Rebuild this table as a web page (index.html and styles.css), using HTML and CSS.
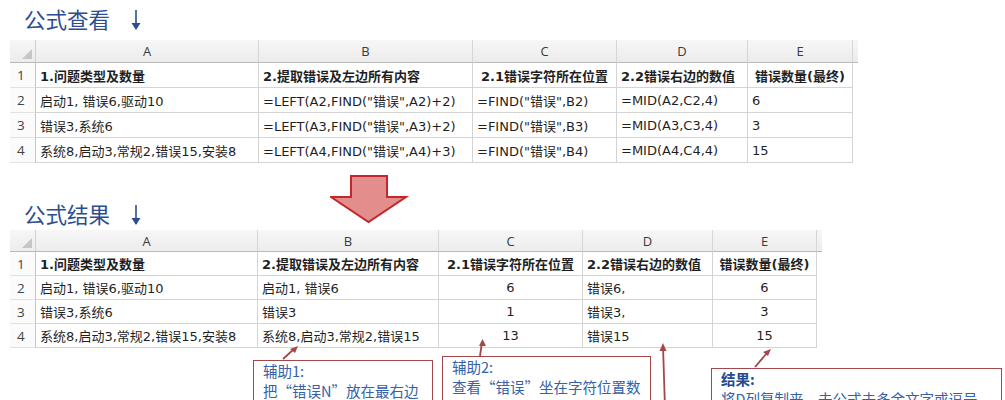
FILE: index.html
```html
<!DOCTYPE html>
<html lang="zh-CN">
<head>
<meta charset="utf-8">
<title>公式查看</title>
<link rel="stylesheet" href="styles.css">
</head>
<body>
<div class="page">
  <div class="title t1">
    <span class="title-text">公式查看</span>
    <svg class="down" width="12" height="22" viewBox="0 0 12 22"><path d="M6 1 V20" stroke="#2e4d8f" stroke-width="1.6" fill="none"/><path d="M1.5 14 L6 21 L10.5 14 Z" fill="#2e4d8f"/></svg>
  </div>

  <div class="sheet s1">
    <div class="row head">
      <div class="corner"><svg width="10" height="10" viewBox="0 0 10 10"><path d="M10 0 V10 H0 Z" fill="#c6c6c6"/></svg></div>
      <div class="col">A</div><div class="col">B</div><div class="col">C</div><div class="col">D</div><div class="col">E</div><div class="col tail"></div>
    </div>
    <div class="row">
      <div class="num">1</div>
      <div class="cell b">1.问题类型及数量</div>
      <div class="cell b">2.提取错误及左边所有内容</div>
      <div class="cell b c">2.1错误字符所在位置</div>
      <div class="cell b">2.2错误右边的数值</div>
      <div class="cell b c">错误数量(最终)</div>
    </div>
    <div class="row">
      <div class="num">2</div>
      <div class="cell">启动1, 错误6,驱动10</div>
      <div class="cell">=LEFT(A2,FIND("错误",A2)+2)</div>
      <div class="cell">=FIND("错误",B2)</div>
      <div class="cell">=MID(A2,C2,4)</div>
      <div class="cell">6</div>
    </div>
    <div class="row">
      <div class="num">3</div>
      <div class="cell">错误3,系统6</div>
      <div class="cell">=LEFT(A3,FIND("错误",A3)+2)</div>
      <div class="cell">=FIND("错误",B3)</div>
      <div class="cell">=MID(A3,C3,4)</div>
      <div class="cell">3</div>
    </div>
    <div class="row">
      <div class="num">4</div>
      <div class="cell">系统8,启动3,常规2,错误15,安装8</div>
      <div class="cell">=LEFT(A4,FIND("错误",A4)+3)</div>
      <div class="cell">=FIND("错误",B4)</div>
      <div class="cell">=MID(A4,C4,4)</div>
      <div class="cell">15</div>
    </div>
  </div>

  <div class="mid">
    <div class="title t2">
      <span class="title-text">公式结果</span>
      <svg class="down" width="12" height="22" viewBox="0 0 12 22"><path d="M6 1 V20" stroke="#2e4d8f" stroke-width="1.6" fill="none"/><path d="M1.5 14 L6 21 L10.5 14 Z" fill="#2e4d8f"/></svg>
    </div>
    <svg class="bigarrow" width="80" height="50" viewBox="0 0 80 50">
      <path d="M21 1 H57 V22 H76 L38.5 47 L1 22 H21 Z" fill="#e38d8d" stroke="#c3262c" stroke-width="2" stroke-linejoin="miter"/>
    </svg>
  </div>

  <div class="sheet s2">
    <div class="row head">
      <div class="corner"><svg width="10" height="10" viewBox="0 0 10 10"><path d="M10 0 V10 H0 Z" fill="#c6c6c6"/></svg></div>
      <div class="col">A</div><div class="col">B</div><div class="col">C</div><div class="col">D</div><div class="col">E</div><div class="col tail"></div>
    </div>
    <div class="row">
      <div class="num">1</div>
      <div class="cell b">1.问题类型及数量</div>
      <div class="cell b">2.提取错误及左边所有内容</div>
      <div class="cell b c">2.1错误字符所在位置</div>
      <div class="cell b">2.2错误右边的数值</div>
      <div class="cell b c">错误数量(最终)</div>
    </div>
    <div class="row">
      <div class="num">2</div>
      <div class="cell">启动1, 错误6,驱动10</div>
      <div class="cell">启动1, 错误6</div>
      <div class="cell c">6</div>
      <div class="cell">错误6,</div>
      <div class="cell c">6</div>
    </div>
    <div class="row">
      <div class="num">3</div>
      <div class="cell">错误3,系统6</div>
      <div class="cell">错误3</div>
      <div class="cell c">1</div>
      <div class="cell">错误3,</div>
      <div class="cell c">3</div>
    </div>
    <div class="row">
      <div class="num">4</div>
      <div class="cell">系统8,启动3,常规2,错误15,安装8</div>
      <div class="cell">系统8,启动3,常规2,错误15</div>
      <div class="cell c">13</div>
      <div class="cell">错误15</div>
      <div class="cell c">15</div>
    </div>
  </div>

  <div class="notes">
    <svg class="pointers" width="1005" height="60" viewBox="0 0 1005 60">
      <g stroke="#a4474b" stroke-width="1.8" fill="none">
        <path d="M283 11 L294 1"/>
        <path d="M480 8 L482 -6"/>
        <path d="M665 60 L663 -2"/>
        <path d="M755 19 L767 5"/>
      </g>
      <g fill="#a4474b">
        <path d="M298 -2 L290 1 L295 5 Z"/>
        <path d="M482.5 -9 L479 -2 L486 -2 Z"/>
        <path d="M663 -5 L659.5 3 L666.5 3 Z"/>
        <path d="M771 1 L763 4 L768 8 Z"/>
      </g>
    </svg>
    <div class="note n1">
      <div>辅助1:</div>
      <div>把“错误N”放在最右边</div>
    </div>
    <div class="note n2">
      <div>辅助2:</div>
      <div>查看“错误”坐在字符位置数</div>
    </div>
    <div class="note n3">
      <div class="strong">结果:</div>
      <div>将D列复制来，去公式去多余文字或逗号</div>
    </div>
  </div>
</div>
</body>
</html>
```

FILE: styles.css
```css
html, body {
  margin: 0;
  padding: 0;
  background: #ffffff;
}

body {
  font-family: "DejaVu Sans", "Noto Sans CJK SC", sans-serif;
  color: #1e1e1e;
  overflow: hidden;
}

.page {
  width: 1005px;
  height: 400px;
  overflow: hidden;
}

.title {
  display: flex;
  align-items: center;
  gap: 20px;
  padding-left: 24px;
  color: #2e4d8f;
  font-family: "Noto Sans CJK SC", sans-serif;
  font-size: 21.5px;
  line-height: 24px;
}

.t1 {
  height: 40px;
  padding-top: 7px;
  box-sizing: border-box;
  align-items: flex-start;
}

.down {
  margin-top: 2px;
}

.sheet {
  margin-left: 10px;
  font-size: 13px;
}

.row {
  display: grid;
  align-items: stretch;
}

.s1 .row {
  grid-template-columns: 26px 223px 214px 144px 131px 105px 5px;
  height: 25px;
}

.s1 .row.head {
  height: 23px;
}

.s2 .row {
  grid-template-columns: 26px 222px 181px 144px 130px 104px 5px;
  height: 24px;
}

.s2 .row.head {
  height: 22px;
}

.head > div {
  background: linear-gradient(#f7f7f7, #ececec);
  border-bottom: 1px solid #b9b9b9;
  box-sizing: border-box;
}

.corner {
  border-right: 1px solid #d0d0d0;
  display: flex;
  align-items: flex-end;
  justify-content: flex-end;
  padding: 0 3px 3px 0;
}

.col {
  border-right: 1px solid #d6d6d6;
  display: flex;
  align-items: center;
  justify-content: center;
  color: #3a3a3a;
  font-family: "Open Sans", sans-serif;
  font-size: 13px;
}

.col.tail {
  border-right: none;
}

.num {
  display: flex;
  align-items: center;
  padding-left: 7px;
  color: #444;
  background: #fbfbfb;
  border-right: 1px solid #c4c4c4;
  border-bottom: 1px solid #e2e2e2;
  font-family: "Open Sans", sans-serif;
  font-size: 13.5px;
}

.cell {
  display: flex;
  align-items: center;
  padding-left: 4px;
  white-space: nowrap;
  overflow: hidden;
  border-right: 1px solid #d4d4d4;
  border-bottom: 1px solid #d4d4d4;
  box-sizing: border-box;
  color: #1f1f1f;
}

.cell.b {
  font-weight: 700;
}

.cell.c {
  justify-content: center;
  padding-left: 0;
}

.mid {
  height: 67px;
  display: flex;
  align-items: flex-end;
}

.t2 {
  padding-bottom: 4px;
}

.bigarrow {
  margin-left: 188px;
  margin-bottom: 5px;
}

.notes {
  position: relative;
  height: 60px;
}

.pointers {
  position: absolute;
  left: 0;
  top: 0;
  overflow: visible;
}

.note {
  position: absolute;
  border: 1.6px solid #a4474b;
  box-sizing: border-box;
  height: 70px;
  color: #3461a9;
  font-family: "Noto Sans CJK SC", sans-serif;
  font-size: 14.5px;
  line-height: 20px;
  padding: 0 0 0 9px;
  background: #ffffff;
  white-space: nowrap;
}

.n1 {
  left: 253px;
  top: 12px;
  width: 180px;
}

.n2 {
  left: 442px;
  top: 8px;
  width: 209px;
}

.n3 {
  left: 711px;
  top: 20px;
  width: 291px;
}

.strong {
  font-weight: 700;
  color: #254a8f;
}
```
